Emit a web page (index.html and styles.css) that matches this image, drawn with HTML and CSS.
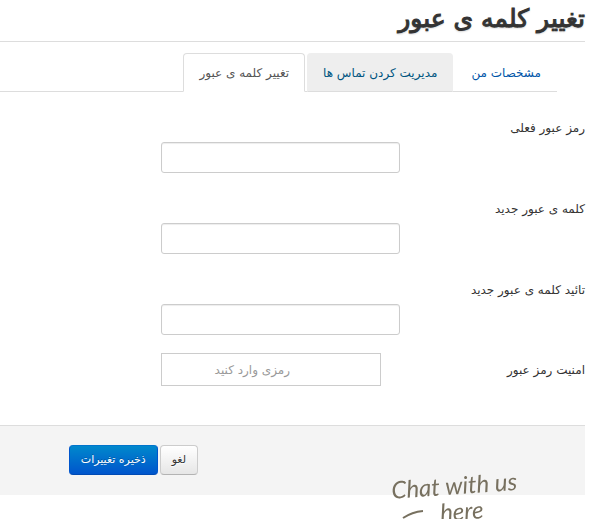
FILE: index.html
```html
<!DOCTYPE html>
<html lang="fa" dir="rtl">
<head>
<meta charset="utf-8">
<meta name="viewport" content="width=device-width, initial-scale=1">
<title>تغییر کلمه ی عبور</title>
<link rel="stylesheet" href="styles.css">
</head>
<body>
<main class="page">
  <h1 class="page-title">تغییر کلمه ی عبور</h1>
  <nav class="tabs">
    <a class="tab" href="#details">مشخصات من</a>
    <a class="tab tab-hover" href="#contacts">مدیریت کردن تماس ها</a>
    <a class="tab tab-active" href="#password" aria-current="page">تغییر کلمه ی عبور</a>
  </nav>
  <form class="form">
    <div class="field">
      <label for="current">رمز عبور فعلی</label>
      <input id="current" type="password">
    </div>
    <div class="field">
      <label for="new">کلمه ی عبور جدید</label>
      <input id="new" type="password">
    </div>
    <div class="field">
      <label for="confirm">تائید کلمه ی عبور جدید</label>
      <input id="confirm" type="password">
    </div>
    <div class="strength">
      <span class="strength-label">امنیت رمز عبور</span>
      <output class="strength-box" for="new">رمزی وارد کنید</output>
    </div>
    <div class="actions">
      <button class="btn" type="reset">لغو</button>
      <button class="btn btn-primary" type="submit">ذخیره تغییرات</button>
    </div>
  </form>
</main>
<a class="chat" href="#chat" dir="ltr" lang="en">
  <span class="chat-text">Chat with us</span>
  <span class="chat-text chat-second">here</span>
  <svg class="chat-arrow" viewBox="0 0 24 10" aria-hidden="true"><path d="M1 9Q10 3 21 2"/></svg>
</a>
</body>
</html>
```
FILE: styles.css
```css
* {
  box-sizing: border-box;
}

body {
  margin: 0;
  background: #fff;
  color: #333;
  font: 12px/20px "DejaVu Sans", sans-serif;
}

.page {
  padding-right: 5px;
}

.page-title {
  margin: 0;
  height: 42px;
  border-bottom: 1px solid #ddd;
  font-size: 25px;
  font-weight: 400;
  line-height: 38px;
  text-shadow: 0 1px 2px #bbb;
  -webkit-text-stroke: 1px #333;
}

.tabs {
  display: flex;
  gap: 2px;
  margin: 11px 28px 0 0;
  border-bottom: 1px solid #ddd;
}

.tab {
  margin-bottom: -1px;
  padding: 9px 15px 8px;
  border: 1px solid transparent;
  border-radius: 4px 4px 0 0;
  color: #0055a8;
  text-decoration: none;
  white-space: nowrap;
}

.tab-hover {
  background: #eee;
  border-bottom-color: #ddd;
  color: #005580;
}

.tab-active {
  background: #fff;
  border-color: #ddd #ddd #fff;
  color: #555;
}

.form {
  margin-top: 26px;
}

.field {
  display: flex;
  flex-direction: column;
  gap: 4px;
  margin-bottom: 26px;
}

.field label {
  align-self: flex-start;
}

.field input {
  width: 239px;
  height: 31px;
  margin-right: 185px;
  padding: 4px 6px;
  border: 1px solid #ccc;
  border-radius: 3px;
  background: #fff;
  box-shadow: inset 0 1px 1px rgba(0, 0, 0, 0.075);
  font: inherit;
}

.strength {
  display: flex;
  align-items: center;
  margin-top: -8px;
}

.strength-label {
  width: 204px;
}

.strength-box {
  width: 220px;
  padding: 6px 90px 5px 0;
  border: 1px solid #ccc;
  color: #999;
  white-space: nowrap;
}

.actions {
  display: flex;
  gap: 2px;
  margin-top: 39px;
  padding: 19px 387px 20px 0;
  border-top: 1px solid #ddd;
  background: #f4f4f4;
}

.btn {
  height: 30px;
  padding: 0 11px;
  border: 1px solid #ccc;
  border-bottom-color: #b3b3b3;
  border-radius: 4px;
  background: linear-gradient(#fff, #e6e6e6);
  color: #333;
  font: 11px/20px "DejaVu Sans", sans-serif;
  white-space: nowrap;
  text-shadow: 0 1px 1px #fff;
}

.btn-primary {
  border-color: #0074cc #05c #004ab3;
  background: linear-gradient(#08c, #05c);
  color: #fff;
  text-shadow: 0 -1px 0 rgba(0, 0, 0, 0.25);
}

.chat {
  position: fixed;
  right: 62px;
  bottom: 0;
  width: 138px;
  height: 52px;
  overflow: hidden;
  color: #77705f;
  font: italic 400 24px/26px Lato, sans-serif;
  text-decoration: none;
}

.chat-text {
  display: block;
  padding: 5px 0 0 1px;
  white-space: nowrap;
  transform: rotate(-4deg);
}

.chat-second {
  padding: 0 0 0 50px;
}

.chat-arrow {
  position: absolute;
  bottom: 0;
  left: 12px;
  width: 24px;
  height: 10px;
  fill: none;
  stroke: #77705f;
  stroke-width: 2;
}
```
